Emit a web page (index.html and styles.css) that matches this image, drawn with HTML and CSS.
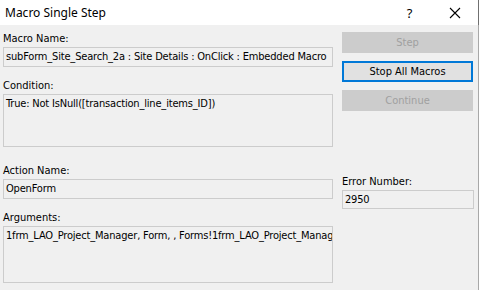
FILE: index.html
```html
<!DOCTYPE html>
<html lang="en">
<head>
    <meta charset="UTF-8">
    <meta name="viewport" content="width=device-width, initial-scale=1.0">
    <title>Macro Single Step</title>
    <link rel="stylesheet" href="styles.css">
</head>
<body>
    <div class="window">
        <!-- Title bar -->
        <div class="title-bar">
            <span class="title">Macro Single Step</span>
            <span class="title-help">?</span>
            <span class="title-close">
                <svg width="12" height="12" viewBox="0 0 12 12">
                    <path d="M1 1 L11 11 M11 1 L1 11" stroke="#000" stroke-width="1.1" fill="none"/>
                </svg>
            </span>
        </div>

        <div class="dialog">
            <!-- Left side: fields -->
            <div class="fields">
                <div class="label">Macro Name:</div>
                <div class="box box-line">subForm_Site_Search_2a : Site Details : OnClick : Embedded Macro</div>

                <div class="label gap-small">Condition:</div>
                <div class="box box-condition">True: Not IsNull([transaction_line_items_ID])</div>

                <div class="label gap-big">Action Name:</div>
                <div class="box box-line">OpenForm</div>

                <div class="label gap-small">Arguments:</div>
                <div class="box box-args">1frm_LAO_Project_Manager, Form, , Forms!1frm_LAO_Project_Manager</div>
            </div>

            <!-- Right side: buttons -->
            <div class="side">
                <button class="btn" disabled>Step</button>
                <button class="btn btn-default">Stop All Macros</button>
                <button class="btn" disabled>Continue</button>

                <div class="label error-label">Error Number:</div>
                <div class="box box-error">2950</div>
            </div>
        </div>
    </div>
</body>
</html>
```

FILE: styles.css
```css
/* General styling */
body {
    margin: 0;
    padding: 0;
    background-color: #ffffff;
    font-family: "DejaVu Sans Condensed", "DejaVu Sans", sans-serif;
    font-size: 11px;
    color: #000000;
}

.window {
    width: 478px;
    height: 290px;
    background-color: #f0f0f0;
    border-right: 1px solid #a8a8a8;
}

/* Title bar */
.title-bar {
    height: 25px;
    background-color: #ffffff;
    display: flex;
    align-items: center;
    border-right: 1px solid #707070;
    margin-right: -1px;
}

.title {
    font-family: "Noto Sans", sans-serif;
    font-size: 12px;
    padding-left: 5px;
    flex: 1;
    color: #000000;
}

.title-help {
    font-family: "Noto Sans", sans-serif;
    font-size: 13px;
    width: 45px;
    text-align: center;
}

.title-close {
    width: 46px;
    display: flex;
    justify-content: center;
    align-items: center;
}

/* Dialog body */
.dialog {
    display: flex;
    padding: 6px 0 0 3px;
}

.fields {
    width: 330px;
    display: flex;
    flex-direction: column;
}

.label {
    height: 16px;
    line-height: 16px;
    color: #000000;
}

.gap-small {
    margin-top: 11px;
}

.gap-big {
    margin-top: 16px;
}

.box {
    box-sizing: border-box;
    border: 1px solid #cccccc;
    background-color: #f0f0f0;
    padding: 0 2px;
    white-space: nowrap;
    overflow: hidden;
    letter-spacing: -0.18px;
}

.box-line {
    height: 20px;
    line-height: 18px;
}

.box-condition {
    height: 53px;
    padding-top: 2px;
    line-height: 14px;
}

.box-args {
    height: 57px;
    padding-top: 2px;
    line-height: 14px;
}

/* Buttons */
.side {
    width: 132px;
    margin-left: 9px;
    margin-top: 1px;
    display: flex;
    flex-direction: column;
}

.btn {
    box-sizing: border-box;
    height: 21px;
    width: 131px;
    margin-bottom: 8px;
    font-family: inherit;
    font-size: 11px;
    color: #000000;
    background-color: #e1e1e1;
    border: 1px solid #adadad;
    padding: 0;
}

.btn:disabled {
    background-color: #cccccc;
    border-color: #cccccc;
    color: #a0a0a0;
}

.btn-default {
    border: 1px solid #0078d7;
    box-shadow: inset 0 0 0 1px #0078d7;
}

.error-label {
    margin-top: 55px;
}

.box-error {
    height: 19px;
    line-height: 17px;
    width: 132px;
}
```
